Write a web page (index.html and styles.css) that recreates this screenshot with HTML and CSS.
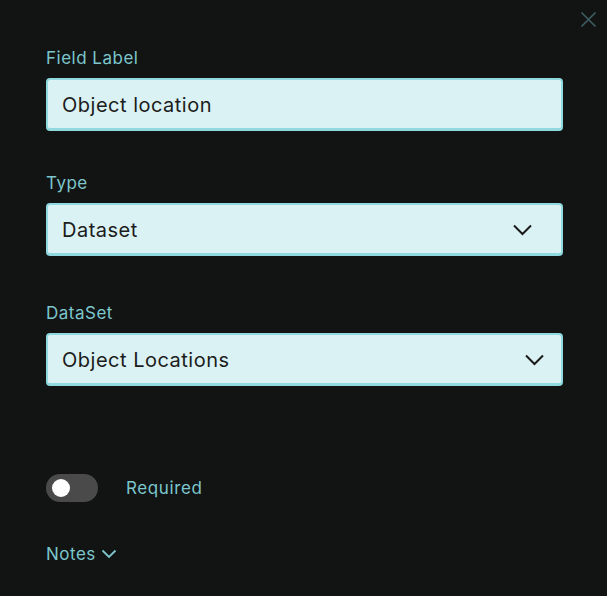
FILE: index.html
```html
<!DOCTYPE html>
<html>
<head>
<meta charset="utf-8">
<link rel="stylesheet" href="styles.css">
</head>
<body>
<div class="panel">
  <button class="close" aria-label="Close">
    <svg width="17" height="17" viewBox="0 0 17 17"><path d="M1.5 1.5 L15.5 15.5 M15.5 1.5 L1.5 15.5" stroke="#3e5e62" stroke-width="1.6" fill="none"/></svg>
  </button>
  <div class="form">
    <div class="field f1">
      <label class="label">Field Label</label>
      <div class="box">Object location</div>
    </div>
    <div class="field f2">
      <label class="label">Type</label>
      <div class="box select type">
        <span>Dataset</span>
        <svg class="chev" width="19" height="12" viewBox="0 0 19 12"><path d="M1 1.5 L9.5 10 L18 1.5" stroke="#1a1a1a" stroke-width="2" fill="none"/></svg>
      </div>
    </div>
    <div class="field f3">
      <label class="label">DataSet</label>
      <div class="box select ds">
        <span>Object Locations</span>
        <svg class="chev" width="19" height="12" viewBox="0 0 19 12"><path d="M1 1.5 L9.5 10 L18 1.5" stroke="#1a1a1a" stroke-width="2" fill="none"/></svg>
      </div>
    </div>
    <div class="toggle-row">
      <div class="toggle"><div class="knob"></div></div>
      <span class="toggle-label">Required</span>
    </div>
    <div class="notes">
      <span>Notes</span>
      <svg width="16" height="10" viewBox="0 0 16 10"><path d="M1.5 1.5 L8 8 L14.5 1.5" stroke="#7cc6cc" stroke-width="1.8" fill="none"/></svg>
    </div>
  </div>
</div>
</body>
</html>
```

FILE: styles.css
```css
html, body {
  margin: 0;
  padding: 0;
  background: #121414;
}
body {
  font-family: Inter, "Noto Sans", sans-serif;
  width: 607px;
  height: 596px;
  overflow: hidden;
}
.panel {
  position: relative;
  height: 596px;
  box-sizing: border-box;
  padding: 47px 44px 0 46px;
}
.close {
  position: absolute;
  top: 11px;
  right: 10px;
  background: none;
  border: 0;
  padding: 0;
  width: 17px;
  height: 17px;
  line-height: 0;
}
.form {
  display: flex;
  flex-direction: column;
}
.field {
  display: flex;
  flex-direction: column;
  gap: 9px;
}
.f1 { margin-bottom: 41px; }
.f2 { margin-bottom: 46px; }
.f3 { margin-bottom: 42px; }
.label {
  color: #7cc6cc;
  font-size: 17px;
  line-height: 22px;
  letter-spacing: 0.5px;
}
.box {
  height: 53px;
  box-sizing: border-box;
  background: #daf2f3;
  border: 2px solid #8fd9df;
  border-bottom-width: 3px;
  border-radius: 4px;
  padding: 1px 0 0 14px;
  display: flex;
  align-items: center;
  font-size: 20px;
  letter-spacing: 0.5px;
  color: #1c1c1c;
}
.select {
  justify-content: space-between;
}
.type .chev { margin-right: 29px; }
.ds .chev { margin-right: 17px; }
.toggle-row {
  display: flex;
  align-items: center;
  gap: 28px;
  margin-top: 46px;
}
.toggle {
  width: 52px;
  height: 28px;
  border-radius: 14px;
  background: #4a4a4a;
  position: relative;
}
.knob {
  position: absolute;
  left: 6px;
  top: 5px;
  width: 18px;
  height: 18px;
  border-radius: 50%;
  background: #fff;
}
.toggle-label {
  color: #7cc6cc;
  font-size: 17px;
  letter-spacing: 0.6px;
}
.notes {
  margin-top: 42px;
  display: flex;
  align-items: center;
  gap: 5px;
  color: #7cc6cc;
  font-size: 17px;
  letter-spacing: 0.5px;
}
```
